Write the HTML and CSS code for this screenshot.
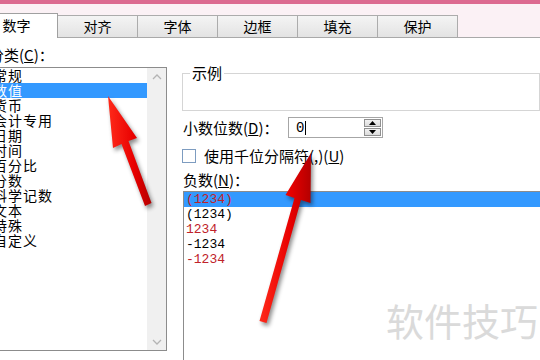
FILE: index.html
```html
<!DOCTYPE html>
<html>
<head>
    <meta charset="UTF-8">
    <meta name="viewport" content="width=device-width, initial-scale=1.0">
    <link rel="stylesheet" href="styles.css">
</head>
<body>
    <div class="topbar"></div>
    <div class="tabstrip">
        <div class="tab active">数字</div>
        <div class="tab">对齐</div>
        <div class="tab">字体</div>
        <div class="tab">边框</div>
        <div class="tab">填充</div>
        <div class="tab">保护</div>
    </div>

    <div class="content">
        <div class="left">
            <div class="label">分类(<u>C</u>)：</div>
            <div class="category-list">
                <ul class="items">
                    <li>常规</li>
                    <li class="selected">数值</li>
                    <li>货币</li>
                    <li>会计专用</li>
                    <li>日期</li>
                    <li>时间</li>
                    <li>百分比</li>
                    <li>分数</li>
                    <li>科学记数</li>
                    <li>文本</li>
                    <li>特殊</li>
                    <li>自定义</li>
                </ul>
                <div class="scrollbar">
                    <svg width="10" height="6" viewBox="0 0 10 6"><polyline points="1,5 5,1 9,5" fill="none" stroke="#b4b4b4" stroke-width="1.3"/></svg>
                    <svg width="10" height="6" viewBox="0 0 10 6"><polyline points="1,1 5,5 9,1" fill="none" stroke="#b4b4b4" stroke-width="1.3"/></svg>
                </div>
            </div>
        </div>

        <div class="right">
            <fieldset class="sample">
                <legend>示例</legend>
            </fieldset>

            <div class="decimals-row">
                <span class="decimals-label">小数位数(<u>D</u>)：</span>
                <div class="spin-input">
                    <span class="value">0</span><span class="caret"></span>
                    <div class="spin">
                        <div class="spin-btn"><svg width="7" height="4" viewBox="0 0 7 4"><polygon points="0,4 3.5,0 7,4" fill="#000"/></svg></div>
                        <div class="spin-btn"><svg width="7" height="4" viewBox="0 0 7 4"><polygon points="0,0 3.5,4 7,0" fill="#000"/></svg></div>
                    </div>
                </div>
            </div>

            <div class="check-row">
                <span class="checkbox"></span>
                <span>使用千位分隔符(,)(<u>U</u>)</span>
            </div>

            <div class="label neg-label">负数(<u>N</u>)：</div>
            <div class="neg-list">
                <div class="row selected red">(1234)</div>
                <div class="row">(1234)</div>
                <div class="row red">1234</div>
                <div class="row">-1234</div>
                <div class="row red">-1234</div>
            </div>
        </div>
    </div>

    <div class="watermark">软件技巧</div>

    <svg class="arrows" width="540" height="360" viewBox="0 0 540 360">
        <defs>
            <linearGradient id="shade1" x1="0" y1="0" x2="1" y2="0">
                <stop offset="0" stop-color="#ff2a1a"/>
                <stop offset="0.6" stop-color="#e80000"/>
                <stop offset="1" stop-color="#b30000"/>
            </linearGradient>
        </defs>
        <polygon class="arrow" fill="url(#shade1)"
            points="108,96 137,138 128.5,141 151.5,203 145,206 121.5,144 113,148"/>
        <polygon class="arrow" fill="url(#shade1)"
            points="311,153 310.5,203 301,200 266.5,323 259.5,321 294.5,198 285.5,195"/>
    </svg>
</body>
</html>
```

FILE: styles.css
```css
* {
    margin: 0;
    padding: 0;
    box-sizing: border-box;
}

body {
    width: 540px;
    height: 360px;
    overflow: hidden;
    position: relative;
    background: #fff;
    font-family: "Noto Sans CJK SC", "Liberation Sans", sans-serif;
    font-size: 15px;
    color: #000;
}

u {
    text-decoration: underline;
    text-underline-offset: 1px;
}

.topbar {
    height: 4px;
    background: #dc6a90;
}

.tabstrip {
    height: 34px;
    display: flex;
    align-items: flex-end;
    background: #fbf1f5;
    border-bottom: 1px solid #a9a9a9;
    margin-left: -25px;
}

.tab {
    width: 81px;
    height: 22px;
    margin-left: -1px;
    border: 1px solid #acacac;
    border-bottom: none;
    background: linear-gradient(#f4f4f4, #e3e3e3);
    font-size: 14px;
    line-height: 20px;
    text-align: center;
}

.tab.active {
    width: 83px;
    height: 25px;
    margin-left: 0;
    margin-bottom: -1px;
    background: #fff;
    border-color: #a0a0a0;
    line-height: 23px;
    position: relative;
    z-index: 1;
}

.content {
    display: flex;
    gap: 16px;
    margin-left: -11px;
    height: 322px;
    overflow: hidden;
}

.label {
    line-height: 18px;
    margin-top: 8px;
    white-space: nowrap;
}

.left {
    width: 178px;
}

.category-list {
    margin-top: 3px;
    margin-left: 1px;
    height: 284px;
    border: 1px solid #8c8c8c;
    display: flex;
}

.items {
    list-style: none;
    flex: 1;
}

.items li {
    height: 15px;
    line-height: 15px;
    padding-left: 2px;
    font-size: 14px;
    letter-spacing: 1px;
    white-space: nowrap;
}

.items li.selected {
    background: #3399ff;
    color: #fff;
}

.scrollbar {
    width: 19px;
    background: #f0f0f0;
    display: flex;
    flex-direction: column;
    justify-content: space-between;
    align-items: center;
    padding: 6px 0 5px;
}

.right {
    flex: 1;
}

.sample {
    margin-top: 27px;
    height: 46px;
    border: 1px solid #d5d5d5;
    margin-left: -1px;
    padding: 0 6px;
}

.sample legend {
    padding: 0 2px;
    margin-left: 1px;
    line-height: 16px;
}

.decimals-row {
    margin-top: 6px;
    display: flex;
    align-items: center;
}

.decimals-label {
    width: 105px;
    white-space: nowrap;
}

.spin-input {
    width: 95px;
    height: 21px;
    border: 1px solid #a6a6a6;
    display: flex;
    align-items: center;
    padding-left: 7px;
    font-family: "Liberation Mono", monospace;
    font-size: 14px;
}

.caret {
    width: 1px;
    height: 14px;
    background: #000;
    margin-left: 1px;
}

.spin {
    margin-left: auto;
    margin-right: 1px;
    display: flex;
    flex-direction: column;
    gap: 1px;
}

.spin-btn {
    width: 17px;
    height: 8px;
    border: 1px solid #909090;
    background: linear-gradient(#f2f2f2, #dcdcdc);
    display: flex;
    align-items: center;
    justify-content: center;
}

.check-row {
    margin-top: 10px;
    display: flex;
    align-items: center;
    gap: 8px;
    line-height: 16px;
    white-space: nowrap;
}

.checkbox {
    width: 14px;
    height: 14px;
    border: 1px solid #7d9cc0;
    background: #fff;
    margin-left: -1px;
}

.neg-label {
    margin-top: 8px;
    line-height: 16px;
}

.neg-list {
    margin-top: 3px;
    height: 180px;
    margin-right: -10px;
    border: 1px solid #8c8c8c;
    border-right: none;
    font-family: "Liberation Mono", monospace;
    font-size: 13px;
}

.neg-list .row {
    height: 15px;
    line-height: 15px;
    padding-left: 2px;
}

.neg-list .row.selected {
    background: #3399ff;
}

.neg-list .red {
    color: #c0222a;
}

.watermark {
    position: absolute;
    left: 386px;
    top: 300px;
    font-size: 38px;
    line-height: 40px;
    color: #dadada;
    white-space: nowrap;
}

.arrows {
    position: absolute;
    left: 0;
    top: 0;
    pointer-events: none;
}

.arrow {
    filter: drop-shadow(2px 3px 2px rgba(0, 0, 0, 0.45));
}
```
